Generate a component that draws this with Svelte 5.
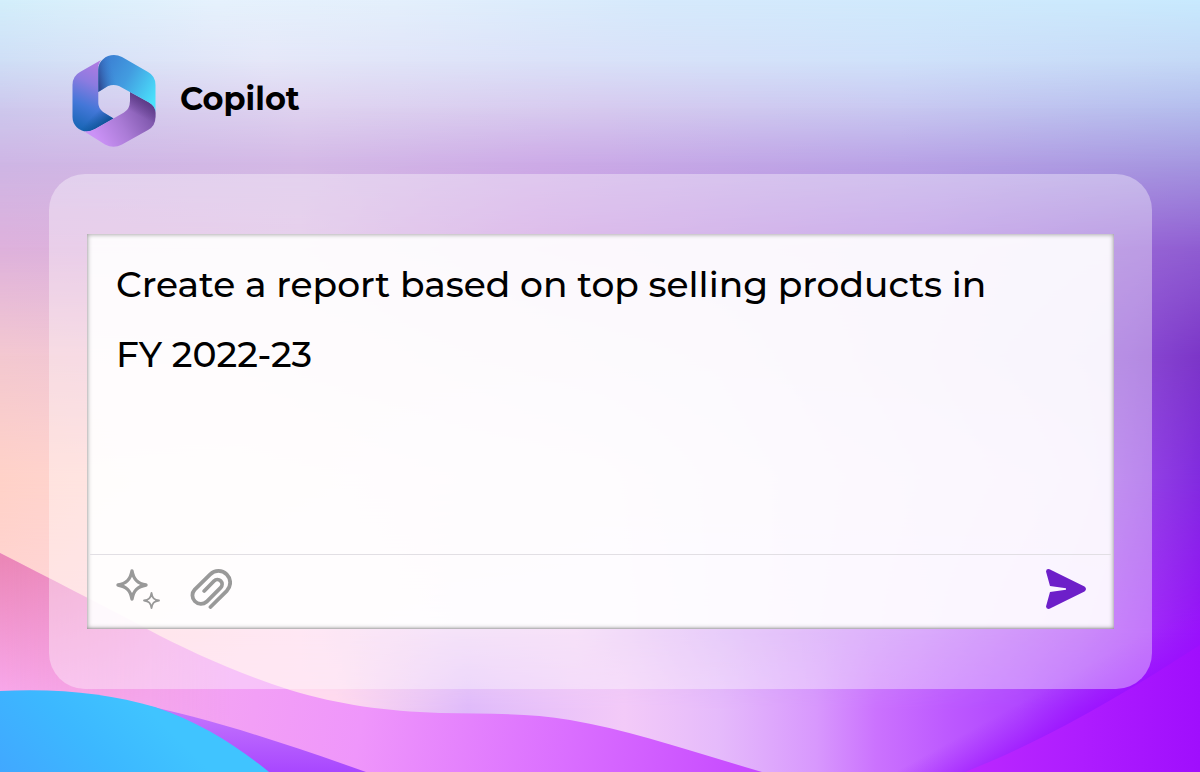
<script>
  let prompt = $state('Create a report based on top selling products in\nFY 2022-23');
</script>

<div class="page">
  <div class="backdrop" aria-hidden="true">
    <div class="sky s0"></div>
    <div class="sky s1"></div>
    <div class="sky s2"></div>
    <div class="sky s3"></div>
    <div class="sky s4"></div>
    <div class="sky s5"></div>
    <div class="sky s6"></div>
    <div class="sky s7"></div>
    <div class="sky s8"></div>
    <svg class="waves" viewBox="0 0 1200 772" preserveAspectRatio="none">
      <defs>
        <linearGradient id="pink" gradientUnits="userSpaceOnUse" x1="0" y1="640" x2="760" y2="772">
          <stop offset="0" stop-color="#f4a0e0" />
          <stop offset=".2" stop-color="#f5a8f1" />
          <stop offset=".48" stop-color="#ef96fb" />
          <stop offset=".75" stop-color="#da6eff" />
          <stop offset="1" stop-color="#c548ff" />
        </linearGradient>
        <linearGradient id="rose" gradientUnits="userSpaceOnUse" x1="20" y1="563" x2="-10" y2="685">
          <stop offset="0" stop-color="#e880ac" stop-opacity=".8" />
          <stop offset="1" stop-color="#f8a8ea" stop-opacity=".8" />
        </linearGradient>
        <linearGradient id="rose-fade" x1="0" x2="1" y1="0" y2="0">
          <stop offset="0" stop-color="#fff" />
          <stop offset="1" stop-color="#000" />
        </linearGradient>
        <mask id="rose-mask"><rect y="540" width="230" height="232" fill="url(#rose-fade)" /></mask>
        <linearGradient id="blue" gradientUnits="userSpaceOnUse" x1="0" y1="800" x2="120" y2="680">
          <stop offset="0" stop-color="#42a4ff" />
          <stop offset=".6" stop-color="#3cb8ff" />
          <stop offset="1" stop-color="#40c4ff" />
        </linearGradient>
        <linearGradient id="violet" x1="0" y1="0" x2="0" y2="1">
          <stop offset="0" stop-color="#c87cfc" />
          <stop offset="1" stop-color="#a847ff" />
        </linearGradient>
        <linearGradient id="magenta" x1="0" y1="0" x2="1" y2="0">
          <stop offset="0" stop-color="#bb28ff" />
          <stop offset=".5" stop-color="#ae1cff" />
          <stop offset="1" stop-color="#a00efd" />
        </linearGradient>
        <linearGradient id="fold" gradientUnits="userSpaceOnUse" x1="1064" y1="678" x2="1084" y2="714">
          <stop offset="0" stop-color="#9c18ff" stop-opacity="0" />
          <stop offset="1" stop-color="#9a0cff" stop-opacity=".65" />
        </linearGradient>
      </defs>
      <path d="M700 772V560H1200V772Z" fill="url(#fold)" />
      <path d="M965 772C1055 736 1130 690 1200 645V772Z" fill="url(#magenta)" />
      <path d="M0 553C50 579 97 602 147 629C190 652 240 674 290 690C340 705 385 711 440 713C490 714 530 713 570 720C630 730 690 751 762 772H0Z" fill="url(#pink)" />
      <path d="M0 553C50 579 97 602 147 629C190 652 240 674 290 690V772H0Z" fill="url(#rose)" mask="url(#rose-mask)" />
      <path d="M130 702C210 718 290 745 366 772H240Z" fill="url(#violet)" />
      <path d="M0 691C60 688 110 694 155 707C200 722 240 748 269 772H0Z" fill="url(#blue)" />
    </svg>
  </div>

  <header class="brand">
    <svg class="logo" viewBox="0 0 84 92" aria-hidden="true">
      <defs>
        <linearGradient id="left" x1=".65" y1="0" x2=".4" y2="1">
          <stop offset="0" stop-color="#b57be2" />
          <stop offset=".35" stop-color="#8b7be0" />
          <stop offset=".68" stop-color="#4477d8" />
          <stop offset="1" stop-color="#1b67b8" />
        </linearGradient>
        <linearGradient id="left-shade" gradientUnits="userSpaceOnUse" x1="17" y1="55" x2="33" y2="71">
          <stop offset=".3" stop-color="#074c8c" stop-opacity="0" />
          <stop offset="1" stop-color="#074c8c" stop-opacity=".9" />
        </linearGradient>
        <linearGradient id="top" gradientUnits="userSpaceOnUse" x1="27" y1="14" x2="83" y2="45">
          <stop offset="0" stop-color="#3b7ed2" />
          <stop offset=".45" stop-color="#429ce0" />
          <stop offset="1" stop-color="#4be2fc" />
        </linearGradient>
        <linearGradient id="top-shade" gradientUnits="userSpaceOnUse" x1="26" y1="25" x2="43" y2="21">
          <stop offset="0" stop-color="#2c3f86" stop-opacity=".85" />
          <stop offset="1" stop-color="#3b7ed2" stop-opacity="0" />
        </linearGradient>
        <linearGradient id="bottom" gradientUnits="userSpaceOnUse" x1="24" y1="82" x2="78" y2="50">
          <stop offset="0" stop-color="#cb92f6" />
          <stop offset=".45" stop-color="#aa7bd6" />
          <stop offset="1" stop-color="#7650a4" />
        </linearGradient>
        <linearGradient id="bottom-shade" gradientUnits="userSpaceOnUse" x1="68" y1="42" x2="60" y2="57">
          <stop offset="0" stop-color="#573681" stop-opacity=".85" />
          <stop offset="1" stop-color="#573681" stop-opacity="0" />
        </linearGradient>
      </defs>
      <path d="M29 5L8 17Q.5 21 .5 30V62C.5 70 7 76.500 15 76.500Q18 76.500 23 74L41.500 63.500L31 57Q26.300 53 26.300 48V15Q26 9 29 5Z" fill="url(#left)" />
      <path d="M.5 45V62C.5 70 7 76.500 15 76.500Q18 76.500 23 74L41.500 63.500L31 57Q26.300 53 26.300 45Z" fill="url(#left-shade)" />
      <path d="M58 37L77 47.500Q83.500 51 83.500 58V62Q83.500 71 76 75L50 89.500Q41.500 94 33 89.500L12 76.300Q18 77 23 74L52 57.500Q58 54 58 46Z" fill="url(#bottom)" />
      <path d="M58 37L77 47.500Q83.500 51 83.500 58V62Q82 69 78 72L50 60Q58 54 58 46Z" fill="url(#bottom-shade)" />
      <path d="M26.300 37V15C26.300 6 34 0 42 0Q46 0 50 2L76 17Q83.500 21 83.500 30V57Q83 51 77 47.500L47 31Q41.500 29 36 31Z" fill="url(#top)" />
      <path d="M26.300 37V15C26.300 6 34 0 42 0L45 30.500Q41.500 29 36 31Z" fill="url(#top-shade)" />
    </svg>
    <h1>Copilot</h1>
  </header>

  <main class="panel">
    <form class="composer" onsubmit={(e) => e.preventDefault()}>
      <textarea aria-label="Prompt" spellcheck="false" bind:value={prompt}></textarea>
      <div class="tools">
        <button type="button" aria-label="Suggestions">
          <svg width="44" height="40" viewBox="0 0 44 40" fill="none" stroke="currentColor" stroke-linejoin="round">
            <path stroke-width="3.400" d="M16 2C17.500 10.500 21.500 14.500 30 16C21.500 17.500 17.500 21.500 16 30C14.500 21.500 10.500 17.500 2 16C10.500 14.500 14.500 10.500 16 2Z" />
            <path stroke-width="1.800" d="M35.500 24C36.300 29 38 30.700 43 31.500C38 32.300 36.300 34 35.500 39C34.700 34 33 32.300 28 31.500C33 30.700 34.700 29 35.500 24Z" />
          </svg>
        </button>
        <button type="button" aria-label="Attach file">
          <svg width="42" height="40" viewBox="0 0 42 40" fill="none" stroke="currentColor" stroke-width="3.800" stroke-linecap="round" stroke-linejoin="round">
            <path d="M20.500 38L36.800 21.800A11.600 11.600 0 0 0 20.200 5.400L4.700 20.600A8.500 8.500 0 0 0 16.500 32.800L30.700 18.600A4.700 4.700 0 0 0 24 12L14.200 22" />
          </svg>
        </button>
        <button class="send" type="submit" aria-label="Send">
          <svg width="41" height="40" viewBox="0 0 41 40" fill="currentColor">
            <path d="M0 2.500Q.3-.6 3.500.2L38.500 17.600Q41.500 20 38.500 22.400L3.500 39.800Q.3 40.600 0 37.500L4 23L20 20.800V19.200L4 17Z" />
          </svg>
        </button>
      </div>
    </form>
  </main>
</div>

<style>
  :global(body) { margin: 0; }

  .page {
    position: relative;
    isolation: isolate;
    box-sizing: border-box;
    min-height: 100vh;
    padding: 55px 48px 83px 49px;
    display: flex;
    flex-direction: column;
    gap: 27px;
    font-family: Montserrat, Inter, sans-serif;
    color: #000;
  }

  .backdrop { position: absolute; inset: 0; z-index: -1; overflow: hidden; }
  .sky, .waves { position: absolute; inset: 0; width: 100%; height: 100%; }

  /* Each band takes over from the one above it through a vertical mask. */
  .s0 { background: linear-gradient(90deg, #d3effb, #e6f2fd 18%, #e4f0fc 33%, #d6eafc 55%, #cceafd 92%, #c8eafe); }
  .s1 { background: linear-gradient(90deg, #cfdef6, #e5e7f8 22%, #dbe1f8 45%, #cfe1fa 75%, #c4d8f6); mask-image: linear-gradient(transparent 0, #000 8%); }
  .s2 { background: linear-gradient(90deg, #cdc8ed, #dfd3f0 25%, #d6caef 50%, #c8c8f1 75%, #b4bded); mask-image: linear-gradient(transparent 8%, #000 14%); }
  .s3 { background: linear-gradient(90deg, #ceb6e5, #d4b9e6 25%, #cdabe7 45%, #b9a3e6 75%, #a597e0); mask-image: linear-gradient(transparent 14%, #000 21%); }
  .s4 { background: linear-gradient(90deg, #deb1dc, #d8b4e0 25%, #ca94de 45%, #ab7bde 78%, #905ed2); mask-image: linear-gradient(transparent 21%, #000 32%); }
  .s5 { background: linear-gradient(90deg, #f3c8d0, #f0c4de 20%, #c8a0e0 60%, #8c4cd4 94%, #7c36c8); mask-image: linear-gradient(transparent 32%, #000 46%); }
  .s6 { background: linear-gradient(90deg, #ffd2c8, #ffd8dc 20%, #e8c8f0 50%, #b068ec 88%, #822be0); mask-image: linear-gradient(transparent 46%, #000 62%); }
  .s7 { background: linear-gradient(90deg, #ffd4d4, #ffdaee 25%, #efd2f6 38%, #f2d0f5 48%, #dbb0f7 60%, #c478fa 77%, #ae48f8 90%, #9812fa); mask-image: linear-gradient(transparent 62%, #000 82%); }
  .s8 { background: linear-gradient(90deg, #ffdaee 28%, #dfbafa 39%, #f3caf8 52%, #e5bafb 60%, #d898fd 68%, #cb72fe 73%, #bd59ff 79%, #b046ff 85%, #a22cff 90%, #9c12ff 95%); mask-image: linear-gradient(transparent 82%, #000 92%); }

  .brand { display: flex; align-items: center; gap: 24px; padding-left: 23px; }
  .logo { width: 84px; height: 92px; }
  h1 { margin: 0; padding-bottom: 4px; font-size: 32px; line-height: 40px; font-weight: 700; }

  .panel {
    flex: 1;
    display: flex;
    padding: 60px 38px;
    border-radius: 36px;
    background: rgba(255, 255, 255, .37);
  }

  .composer {
    flex: 1;
    min-width: 0;
    display: flex;
    flex-direction: column;
    padding: 3px;
    background: rgba(255, 255, 255, .9);
    box-shadow: inset 0 0 4px 1px rgba(0, 0, 0, .3), inset 0 -1px 2px rgba(0, 0, 0, .16);
  }

  textarea {
    flex: 1;
    min-height: 140px;
    padding: 12px 26px;
    border: 0;
    outline: 0;
    resize: none;
    background: none;
    color: inherit;
    font: 500 36px/70px Montserrat, Inter, sans-serif;
  }

  .tools {
    display: flex;
    align-items: center;
    gap: 30px;
    padding: 14px 24px 17px 26px;
    border-top: 1px solid #e2dfe4;
  }

  button { display: flex; padding: 0; border: 0; background: none; color: #999; cursor: pointer; }
  .send { margin-left: auto; color: #6d1fc9; }
</style>
